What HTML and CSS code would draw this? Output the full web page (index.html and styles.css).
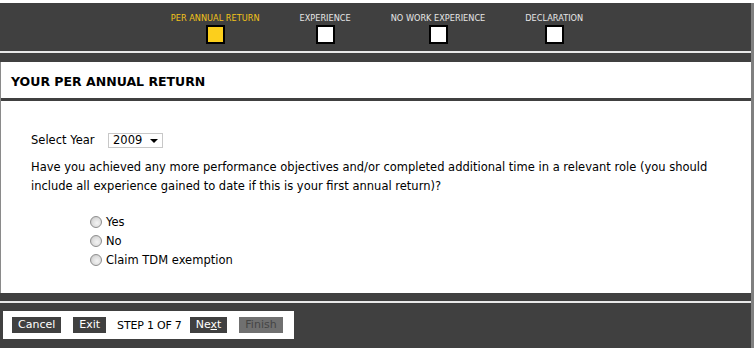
FILE: index.html
```
<!DOCTYPE html>
<html>
<head>
<meta charset="utf-8">
<link rel="stylesheet" href="styles.css">
</head>
<body>
<div class="page">
  <header class="steps">
    <div class="step active"><span class="step-label">PER ANNUAL RETURN</span><span class="step-box"></span></div>
    <div class="step"><span class="step-label">EXPERIENCE</span><span class="step-box"></span></div>
    <div class="step"><span class="step-label">NO WORK EXPERIENCE</span><span class="step-box"></span></div>
    <div class="step"><span class="step-label">DECLARATION</span><span class="step-box"></span></div>
  </header>
  <div class="rule"></div>
  <div class="strip strip-top"></div>
  <main class="content">
    <h1 class="title">YOUR PER ANNUAL RETURN</h1>
    <div class="title-rule"></div>
    <div class="form">
      <div class="year-row">
        <span class="year-label">Select Year</span>
        <span class="select"><span class="select-value">2009</span><span class="select-arrow"></span></span>
      </div>
      <p class="question">Have you achieved any more performance objectives and/or completed additional time in a relevant role (you should include all experience gained to date if this is your first annual return)?</p>
      <ul class="options">
        <li class="option"><span class="radio"></span>Yes</li>
        <li class="option"><span class="radio"></span>No</li>
        <li class="option"><span class="radio"></span>Claim TDM exemption</li>
      </ul>
    </div>
  </main>
  <div class="strip strip-bottom"></div>
  <div class="rule"></div>
  <footer class="footer">
    <div class="actions">
      <span class="btn">Cancel</span>
      <span class="btn">Exit</span>
      <span class="step-count">STEP 1 OF 7</span>
      <span class="btn">Ne<u>x</u>t</span>
      <span class="btn btn-disabled">Finish</span>
    </div>
  </footer>
</div>
</body>
</html>
```
FILE: styles.css
```
html, body {
  margin: 0;
  padding: 0;
  background: #ffffff;
}
body {
  font-family: "DejaVu Sans", Verdana, sans-serif;
  color: #000;
  width: 754px;
  height: 348px;
  overflow: hidden;
}
.page {
  width: 751px;
  height: 345px;
  margin-top: 3px;
  border-right: 3px solid #808080;
  display: flex;
  flex-direction: column;
}
.steps {
  background: #404040;
  height: 48px;
  display: flex;
  justify-content: center;
  gap: 40px;
  padding-left: 3px;
}
.step {
  display: flex;
  flex-direction: column;
  align-items: center;
  padding-top: 10px;
}
.step-label {
  font-size: 8.2px;
  line-height: 10px;
  color: #e6e6e6;
  white-space: nowrap;
}
.step.active .step-label { color: #f2c21a; }
.step-box {
  margin-top: 2px;
  width: 15px;
  height: 15px;
  border: 2px solid #000;
  background: #fff;
}
.step.active .step-box { background: #fccf1c; }
.rule {
  height: 2px;
  background: #e8e8e8;
}
.strip {
  background: #404040;
}
.strip-top { height: 9px; }
.strip-bottom { height: 8px; }
.content {
  flex: 0 0 auto;
  height: 231px;
  border-left: 1px solid #8a8a8a;
  background: #fff;
  display: flex;
  flex-direction: column;
}
.title {
  margin: 0;
  height: 34px;
  padding-top: 2px;
  line-height: 36px;
  padding-left: 10px;
  font-size: 12.5px;
  font-weight: bold;
  color: #000;
}
.title-rule {
  height: 3px;
  background: #404040;
}
.form {
  padding: 31px 0 0 30px;
  font-size: 11.5px;
}
.year-row {
  display: flex;
  align-items: center;
  height: 16px;
}
.year-label {
  width: 77px;
}
.select {
  box-sizing: border-box;
  width: 55px;
  height: 15px;
  border: 1px solid #c8c8c8;
  display: flex;
  align-items: center;
  justify-content: space-between;
  padding: 0 4px 0 4px;
}
.select-arrow {
  width: 0;
  height: 0;
  border-left: 4px solid transparent;
  border-right: 4px solid transparent;
  border-top: 4px solid #000;
  margin-top: 2px;
}
.question {
  margin: 10px 0 0 0;
  line-height: 19px;
  padding-right: 34px;
}
.options {
  list-style: none;
  margin: 16px 0 0 59px;
  padding: 0;
}
.option {
  display: flex;
  align-items: center;
  height: 19px;
}
.radio {
  box-sizing: border-box;
  width: 12px;
  height: 12px;
  border-radius: 50%;
  border: 1px solid #8e8e8e;
  background: radial-gradient(circle at 60% 60%, #f4f4f4 0%, #dcdcdc 55%, #b8b8b8 100%);
  margin-right: 4px;
}
.footer {
  flex: 1 1 auto;
  background: #404040;
  padding: 8px 0 0 3px;
}
.actions {
  width: 291px;
  height: 28px;
  background: #fff;
  display: flex;
  align-items: center;
  padding-left: 9px;
  box-sizing: border-box;
  font-size: 11px;
}
.btn {
  background: #404040;
  color: #fff;
  height: 16px;
  line-height: 16px;
  padding: 0 6px;
  white-space: nowrap;
  margin-right: 12px;
}
.btn:first-child { margin-right: 12px; }
.btn-disabled {
  background: #707070;
  color: #454545;
  margin-right: 0;
}
.step-count {
  color: #000;
  letter-spacing: -0.2px;
  margin-left: -1px;
  margin-right: 8px;
}
```
